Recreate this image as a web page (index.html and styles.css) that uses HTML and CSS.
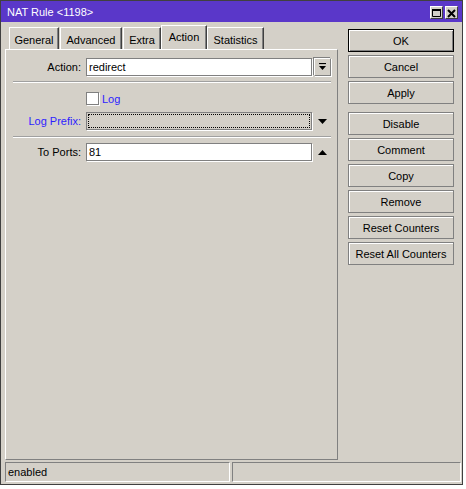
FILE: index.html
```html
<!DOCTYPE html>
<html>
<head>
<meta charset="utf-8">
<link rel="stylesheet" href="styles.css">
</head>
<body>
<div class="window">
  <div class="titlebar">
    <span class="title">NAT Rule &lt;1198&gt;</span>
    <div class="tb-buttons">
      <span class="tb-btn">
        <svg width="11" height="12" viewBox="0 0 11 12"><path d="M1.5 2.5h8v7h-8z" fill="none" stroke="#000" stroke-width="1"/><path d="M1 2h9v2H1z" fill="#000"/></svg>
      </span>
      <span class="tb-btn">
        <svg width="11" height="12" viewBox="0 0 11 12"><path d="M2 3l7 7M9 3l-7 7" stroke="#000" stroke-width="2"/></svg>
      </span>
    </div>
  </div>
  <div class="main">
    <div class="left">
      <div class="tabs">
        <div class="tab t-general">General</div>
        <div class="tab t-advanced">Advanced</div>
        <div class="tab t-extra">Extra</div>
        <div class="tab t-action active">Action</div>
        <div class="tab t-stats">Statistics</div>
      </div>
      <div class="panel">
        <div class="row">
          <label class="lbl">Action:</label>
          <div class="input">redirect</div>
          <div class="dd-btn">
            <svg width="9" height="8" viewBox="0 0 9 8"><path d="M1 0.5h7" stroke="#000" stroke-width="1.2"/><path d="M1 3h7L4.5 7z" fill="#000"/></svg>
          </div>
        </div>
        <div class="sep"></div>
        <div class="row row-check">
          <span class="lbl"></span>
          <span class="checkbox"></span>
          <span class="blue check-text">Log</span>
        </div>
        <div class="row row-prefix">
          <label class="lbl blue">Log Prefix:</label>
          <div class="input disabled"><div class="focus"></div></div>
          <div class="tri-slot">
            <svg width="9" height="5" viewBox="0 0 9 5"><path d="M0 0h9L4.5 5z" fill="#000"/></svg>
          </div>
        </div>
        <div class="sep sep2"></div>
        <div class="row row-ports">
          <label class="lbl">To Ports:</label>
          <div class="input">81</div>
          <div class="tri-slot">
            <svg width="9" height="5" viewBox="0 0 9 5"><path d="M0 5h9L4.5 0z" fill="#000"/></svg>
          </div>
        </div>
      </div>
    </div>
    <div class="buttons">
      <div class="btn default">OK</div>
      <div class="btn">Cancel</div>
      <div class="btn">Apply</div>
      <div class="btn group">Disable</div>
      <div class="btn">Comment</div>
      <div class="btn">Copy</div>
      <div class="btn">Remove</div>
      <div class="btn">Reset Counters</div>
      <div class="btn">Reset All Counters</div>
    </div>
  </div>
  <div class="statusbar">
    <div class="sfield s1">enabled</div>
    <div class="sfield s2"></div>
  </div>
</div>
</body>
</html>
```
FILE: styles.css
```css
* { box-sizing: border-box; }
html, body { margin: 0; padding: 0; }
body {
  background: #ffffff;
  font-family: "Liberation Sans", Arial, sans-serif;
  font-size: 11px;
  color: #000;
  width: 466px;
  height: 489px;
  overflow: hidden;
}
.window {
  width: 463px;
  height: 485px;
  border: 1px solid #404040;
  background: #d4d0c8;
  display: flex;
  flex-direction: column;
}
.titlebar {
  height: 21px;
  flex: none;
  background: #5a37c9;
  display: flex;
  align-items: center;
  justify-content: space-between;
  padding: 0 4px 0 6px;
}
.title {
  color: #fff;
  font-size: 11px;
  padding-top: 1px;
}
.tb-buttons {
  display: flex;
  gap: 2px;
  margin-top: 2px;
}
.tb-btn {
  width: 13px;
  height: 13px;
  background: #d4d0c8;
  border: 1px solid;
  border-color: #fff #404040 #404040 #fff;
  display: flex;
  align-items: center;
  justify-content: center;
}
.tb-btn svg { display: block; }
.main {
  height: 438px;
  flex: none;
  display: flex;
}
.left {
  margin-left: 4px;
  width: 333px;
  display: flex;
  flex-direction: column;
}
.tabs {
  height: 27px;
  display: flex;
  align-items: flex-end;
  padding-left: 4px;
}
.tab {
  height: 22px;
  border: 1px solid;
  border-bottom: none;
  border-color: #fff #404040 #404040 #fff;
  box-shadow: inset -1px 0 #808080;
  display: flex;
  align-items: center;
  justify-content: center;
  padding-top: 2px;
  background: #d4d0c8;
}
.t-general { width: 50px; }
.t-advanced { width: 62px; margin-left: 1px; }
.t-extra { width: 38px; margin-left: 1px; }
.t-action { width: 46px; }
.t-stats { width: 57px; }
.tab.active {
  height: 25px;
  margin-bottom: -1px;
  padding-top: 0;
  padding-bottom: 2px;
}
.panel {
  height: 411px;
  border: 1px solid;
  border-color: #fff #808080 #808080 #fff;
  padding: 8px 6px 0 7px;
}
.row {
  display: flex;
  align-items: center;
  height: 18px;
}
.lbl {
  width: 68px;
  text-align: right;
  margin-right: 5px;
  flex: none;
}
.blue { color: #2d1eff; }
.input {
  width: 226px;
  height: 18px;
  background: #fff;
  border: 1px solid #808080;
  box-shadow: 1px 1px 0 #fff;
  padding: 1px 2px 0;
  line-height: 14px;
  flex: none;
}
.input.disabled {
  background: #d4d0c8;
  padding: 1px;
}
.focus {
  height: 14px;
  border: 1px dotted #000;
}
.dd-btn {
  width: 18px;
  height: 18px;
  margin-left: 1px;
  border: 1px solid;
  border-color: #fff #808080 #808080 #fff;
  box-shadow: 1px 1px 0 #fff, -1px -1px 0 #808080;
  display: flex;
  align-items: center;
  justify-content: center;
  margin-left: 2px;
}
.dd-btn svg, .tri-slot svg { display: block; }
.tri-slot {
  width: 18px;
  margin-left: 2px;
  display: flex;
  justify-content: center;
}
.sep {
  height: 2px;
  border-top: 1px solid #a0a0a0;
  border-bottom: 1px solid #fff;
  margin-top: 5px;
}
.row-check {
  height: 13px;
  margin-top: 9px;
}
.checkbox {
  width: 13px;
  height: 13px;
  background: #fff;
  border: 1px solid #808080;
  box-shadow: 1px 1px 0 #fff;
  flex: none;
}
.check-text { margin-left: 3px; }
.row-prefix { margin-top: 7px; }
.sep2 { margin-top: 6px; }
.row-ports { margin-top: 5px; }
.buttons {
  margin-left: 10px;
  width: 106px;
  padding-top: 7px;
  display: flex;
  flex-direction: column;
  gap: 3px;
}
.btn {
  height: 23px;
  border: 1px solid #808080;
  box-shadow: inset 1px 1px 0 #fff;
  display: flex;
  align-items: center;
  justify-content: center;
  padding-top: 1px;
}
.btn.default {
  border: 1px solid #000;
  box-shadow: inset 1px 1px 0 #fff, inset -1px -1px 0 #808080;
}
.btn.group { margin-top: 5px; }
.statusbar {
  height: 20px;
  margin-top: 2px;
  flex: none;
  display: flex;
  gap: 2px;
  padding-left: 4px;
}
.sfield {
  height: 20px;
  border: 1px solid;
  border-color: #808080 #fff #fff #808080;
  padding: 2px 2px 0;
  line-height: 14px;
}
.s1 { width: 225px; }
.s2 { width: 229px; }
```
